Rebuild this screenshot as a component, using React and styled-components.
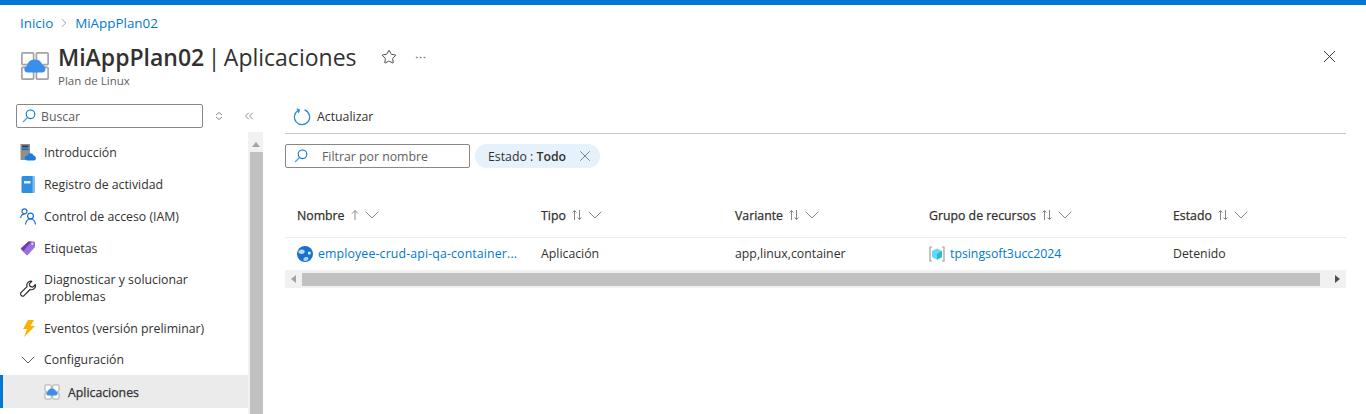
import React from 'react';
import styled, { createGlobalStyle } from 'styled-components';
import { ChevronDown, ChevronRight, ChevronsLeft, MoreHorizontal, Star, X } from 'lucide-react';

const GlobalStyle = createGlobalStyle`
  html, body {
    margin: 0;
    height: 414px;
    overflow: hidden;
    background: #fff;
  }
  body {
    font-family: "Open Sans", "Noto Sans", "Liberation Sans", sans-serif;
    font-size: 12.3px;
    color: #323130;
  }
`;

const PlanIcon = ({ size = 32 }) => (
  <svg width={size} height={size} viewBox="0 0 32 32">
    <g fill="#fff" stroke="#a3a3a3" strokeWidth="1.800">
      <rect x="2" y="2" width="12.500" height="12.500" rx="1" />
      <rect x="17.500" y="2" width="12.500" height="12.500" rx="1" />
      <rect x="2" y="17.500" width="12.500" height="12.500" rx="1" />
      <rect x="17.500" y="17.500" width="12.500" height="12.500" rx="1" />
    </g>
    <path d="M8 23a3.600 3.600 0 0 1-.6-7.100a8.600 8.600 0 0 1 16.500-1a4.200 4.200 0 0 1 .3 8.100z" fill="#3b8eea" />
  </svg>
);

const SearchIcon = () => (
  <svg width="14" height="14" viewBox="0 0 14 14" fill="none" stroke="#0078d4" strokeWidth="1.100">
    <circle cx="8.500" cy="5.300" r="4.300" />
    <path d="M5.500 8.500 1 13" stroke="#5a9fdc" strokeWidth="1.300" />
  </svg>
);

const RefreshIcon = () => (
  <svg width="18" height="18" viewBox="0 0 18 18" fill="none">
    <path d="M6 2.100a7.600 7.600 0 1 0 5.500-.200" stroke="#2a8bdc" strokeWidth="1.300" />
    <path d="M3.800 .8 6.400 2 5.300 4.800" stroke="#2a8bdc" strokeWidth="1.300" />
  </svg>
);

const SortIcon = () => (
  <svg width="12" height="12" viewBox="0 0 12 12" fill="none" stroke="#8a8886" strokeWidth="1">
    <path d="M3.500 11V1.500M1.500 3.500l2-2 2 2M8.500 1v9.500M6.500 8.500l2 2 2-2" />
  </svg>
);

const UpArrow = () => (
  <svg width="10" height="12" viewBox="0 0 10 12" fill="none" stroke="#8a8886" strokeWidth="1">
    <path d="M5 11V1.500M2 4.500l3-3 3 3" />
  </svg>
);

const IntroIcon = () => (
  <svg width="16" height="17" viewBox="0 0 16 17">
    <rect x="0.500" y="0" width="9.500" height="16" fill="#8f8f8f" />
    <rect x="2" y="1.500" width="6.500" height="1.800" fill="#1d3c5c" />
    <rect x="2" y="4.300" width="6.500" height="1.800" fill="#2a6fa8" />
    <path d="M6.800 16.500a2.600 2.600 0 0 1 .3-5.100a3.700 3.700 0 0 1 6.800.4a2.400 2.400 0 0 1 .2 4.700z" fill="#1c7cd6" />
  </svg>
);

const LogIcon = () => (
  <svg width="14" height="17" viewBox="0 0 14 17">
    <rect x="0.500" y="0" width="13" height="17" rx="1.500" fill="#2f8fe0" />
    <rect x="11.500" y="0" width="2" height="17" fill="#7dbdf0" />
    <rect x="3" y="5" width="6.500" height="2.500" fill="#e7f3fc" />
  </svg>
);

const UsersIcon = () => (
  <svg width="17" height="17" viewBox="0 0 17 17" fill="none" stroke="#1a6fd0" strokeWidth="1.200">
    <circle cx="4.500" cy="3.300" r="2.500" />
    <path d="M.6 10c.5-2.500 2-3.800 3.900-3.800" />
    <circle cx="10.500" cy="8" r="2.900" />
    <path d="M5.500 16.500c.4-3.300 2.300-5.500 5-5.500s4.600 2.200 5 5.500" />
  </svg>
);

const TagIcon = () => (
  <svg width="16" height="16" viewBox="0 0 16 16">
    <path d="M8.500 1.500h5.500a1 1 0 0 1 1 1v4.500L7.800 15a1 1 0 0 1-1.400 0L1 9.500a1 1 0 0 1 0-1.400z" fill="#9a70dc" />
    <path d="M1 8.500 8.500 1.500h3L3.500 11z" fill="#6b3fb3" />
    <circle cx="12.300" cy="3.900" r="1.100" fill="#e4d8f5" />
  </svg>
);

const WrenchIcon = () => (
  <svg width="17" height="17" viewBox="0 0 17 17" fill="none" stroke="#2b2b2b" strokeWidth="1.200" strokeLinejoin="round">
    <path d="M10.500 1.200a4 4 0 0 0-3.400 5.400L1 12.700a2 2 0 0 0 0 2.400l.6.600a2 2 0 0 0 2.400 0l6.100-6.200a4 4 0 0 0 5.200-4.800l-2.600 2.400-2.700-.7-.7-2.600 2.500-2.500a4 4 0 0 0-1.300-.1z" />
  </svg>
);

const BoltIcon = () => (
  <svg width="13" height="17" viewBox="0 0 13 17">
    <path d="M6 0h6L8.500 6H13L2 17l3-8H1z" fill="#f7b500" />
  </svg>
);

const GlobeIcon = () => (
  <svg width="16" height="16" viewBox="0 0 16 16">
    <circle cx="8" cy="8" r="8" fill="#1a72cc" />
    <path d="M1.500 5c2-2 4-2 5.500-.8s.3 3.500-1.800 3.800S1 7 1.500 5z" fill="#b5dcf8" />
    <circle cx="12.300" cy="7" r="1.500" fill="#e7f3fc" />
    <path d="M6.500 13c.5-2 3-2.500 4.500-1.500s-.5 3.500-2.500 3.500-2.300-1-2-2z" fill="#a9d4f5" />
  </svg>
);

const GroupIcon = () => (
  <svg width="16" height="16" viewBox="0 0 16 16" fill="none">
    <path d="M3 1H1v14h2M13 1h2v14h-2" stroke="#a0a0a0" strokeWidth="1.200" />
    <path d="M8 2.500 13 5v6l-5 2.800L3 11V5z" fill="#5fdcf5" />
    <path d="M8 8 13 5v6l-5 2.800z" fill="#2fb6e0" />
  </svg>
);

const Page = styled.div`
  height: 414px;
  overflow: hidden;
`;
const TopBar = styled.div`
  height: 5px;
  background: #0078d4;
`;
const Crumbs = styled.nav`
  display: flex;
  align-items: center;
  gap: 4px;
  height: 36px;
  padding-left: 20px;
  font-size: 13.400px;
  color: #0078d4;
  svg {
    color: #605e5c;
  }
`;
const Header = styled.header`
  display: flex;
  align-items: flex-start;
  height: 59px;
  padding: 0 20px 0 20px;
`;
const HeaderIcon = styled.div`
  width: 30px;
  margin: 10px 8px 0 0;
`;
const TitleBlock = styled.div`
  display: flex;
  flex-direction: column;
`;
const Title = styled.h1`
  margin: 0;
  font-size: 23px;
  line-height: 32px;
  font-weight: 400;
  word-spacing: -2.500px;
  b {
    font-weight: 600;
  }
`;
const Subtitle = styled.div`
  margin-top: 1px;
  font-size: 11.500px;
  line-height: 14px;
  color: #605e5c;
`;
const HeaderActions = styled.div`
  display: flex;
  align-items: center;
  gap: 17px;
  height: 32px;
  margin-left: 24px;
  color: #323130;
`;
const CloseButton = styled.div`
  margin: 5px 6px 0 auto;
`;
const Body = styled.div`
  display: flex;
`;
const Side = styled.aside`
  width: 265px;
  flex: none;
`;
const SideTools = styled.div`
  display: flex;
  align-items: center;
  height: 32px;
  padding-left: 16px;
  color: #8a8886;
`;
const SideSearch = styled.div`
  display: flex;
  flex: none;
  align-items: center;
  gap: 5px;
  box-sizing: border-box;
  width: 187px;
  height: 24px;
  padding-left: 5px;
  border: 1px solid #8a8886;
  border-radius: 2px;
  color: #605e5c;
`;
const SortToggle = styled.div`
  display: flex;
  margin-left: 12px;
`;
const Collapse = styled.div`
  display: flex;
  margin-left: 19px;
  color: #605e5c;
`;
const SideColumns = styled.div`
  display: flex;
`;
const Menu = styled.ul`
  width: 248px;
  margin: 0;
  padding: 4px 0 0;
  list-style: none;
`;
const Item = styled.li`
  display: flex;
  align-items: center;
  height: ${(p) => p.$h || 32}px;
  box-sizing: border-box;
  padding-left: ${(p) => (p.$sub ? 44 : 20)}px;
  background: ${(p) => (p.$active ? '#ebebeb' : 'transparent')};
  border-left: ${(p) => (p.$active ? '3px solid #0078d4' : 'none')};
  line-height: 17px;
  ${(p) => p.$active && 'padding-left: 41px; padding-top: 1px;'}
`;
const ItemIcon = styled.span`
  display: flex;
  justify-content: center;
  width: 16px;
  margin-right: 8px;
  flex: none;
  svg {
    flex: none;
  }
`;
const ItemLabel = styled.span`
  max-width: 172px;
  ${(p) => p.$active && '-webkit-text-stroke: 0.25px #323130;'}
`;
const Scroll = styled.div`
  width: 15px;
  height: 282px;
  background: #f1f1f1;
`;
const ScrollUp = styled.div`
  height: 20px;
  display: flex;
  align-items: center;
  justify-content: center;
  padding-top: 4px;
  box-sizing: border-box;
  &::before {
    content: '';
    border: 4px solid transparent;
    border-top: 0;
    border-bottom: 5px solid #a3a3a3;
  }
`;
const ScrollThumb = styled.div`
  height: 262px;
  margin-left: 2px;
  background: #c1c1c1;
`;
const Main = styled.main`
  flex: 1;
  margin: 0 20px;
  min-width: 0;
`;
const Toolbar = styled.div`
  display: flex;
  align-items: center;
  gap: 6px;
  height: 33px;
  padding-left: 8px;
  border-bottom: 1px solid #c8c6c4;
`;
const Filters = styled.div`
  display: flex;
  gap: 5px;
  margin-top: 10px;
`;
const FilterBox = styled.div`
  display: flex;
  align-items: center;
  gap: 14px;
  box-sizing: border-box;
  width: 185px;
  height: 24px;
  padding-left: 8px;
  border: 1px solid #8a8886;
  border-radius: 2px;
  color: #605e5c;
`;
const Pill = styled.div`
  display: flex;
  align-items: center;
  gap: 10px;
  box-sizing: border-box;
  width: 125px;
  height: 24px;
  padding-left: 13px;
  border-radius: 12px;
  background: #e5f1fb;
  b {
    font-weight: 600;
  }
  svg {
    color: #605e5c;
  }
`;
const Grid = styled.div`
  display: grid;
  box-sizing: border-box;
  grid-template-columns: 244px 194px 194px 244px 1fr;
  padding-left: 12px;
  align-items: center;
`;
const HeadRow = styled(Grid)`
  height: 41px;
  margin-top: 29px;
  padding-bottom: 4px;
  border-bottom: 1px solid #edebe9;
  -webkit-text-stroke: 0.25px #323130;
`;
const HeadCell = styled.div`
  display: flex;
  align-items: center;
  gap: 5px;
  svg:last-child {
    margin-left: -5px;
    color: #8a8886;
  }
`;
const DataRow = styled(Grid)`
  height: 32px;
  padding-bottom: 1px;
`;
const NameCell = styled.div`
  display: flex;
  align-items: center;
  gap: 5px;
  color: #0078d4;
  white-space: nowrap;
`;
const AppName = styled(NameCell)`
  letter-spacing: 0.15px;
`;
const HScroll = styled.div`
  display: flex;
  align-items: center;
  height: 18px;
  background: #f1f1f1;
`;
const HArrow = styled.div`
  width: 17px;
  display: flex;
  justify-content: center;
  &::before {
    content: '';
    border: 4px solid transparent;
    ${(p) => (p.$right ? 'border-right: 0; border-left: 5px solid #505050;' : 'border-left: 0; border-right: 5px solid #a3a3a3;')}
  }
`;
const HThumb = styled.div`
  flex: 1;
  height: 13px;
  background: #c1c1c1;
  margin-right: 9px;
`;

const items = [
  { label: 'Introducción', icon: <IntroIcon /> },
  { label: 'Registro de actividad', icon: <LogIcon /> },
  { label: 'Control de acceso (IAM)', icon: <UsersIcon /> },
  { label: 'Etiquetas', icon: <TagIcon /> },
  { label: 'Diagnosticar y solucionar problemas', icon: <WrenchIcon />, h: 48 },
  { label: 'Eventos (versión preliminar)', icon: <BoltIcon /> },
  { label: 'Configuración', icon: <ChevronDown size={24} strokeWidth={1} color="#605e5c" />, h: 31 },
];

const columns = ['Tipo', 'Variante', 'Grupo de recursos', 'Estado'];

const App = () => {
  return (
    <Page>
      <GlobalStyle />
      <TopBar />
      <Crumbs>
        Inicio <ChevronRight size={14} strokeWidth={1} /> MiAppPlan02
      </Crumbs>
      <Header>
        <HeaderIcon>
          <PlanIcon size={30} />
        </HeaderIcon>
        <TitleBlock>
          <Title>
            <b>MiAppPlan02</b> | Aplicaciones
          </Title>
          <Subtitle>Plan de Linux</Subtitle>
        </TitleBlock>
        <HeaderActions>
          <Star size={16} strokeWidth={1.3} />
          <MoreHorizontal size={13} strokeWidth={1} color="#605e5c" />
        </HeaderActions>
        <CloseButton>
          <X size={21} strokeWidth={1.1} />
        </CloseButton>
      </Header>
      <Body>
        <Side>
          <SideTools>
            <SideSearch>
              <SearchIcon />
              Buscar
            </SideSearch>
            <SortToggle>
              <svg width="8" height="10" viewBox="0 0 8 10" fill="none" stroke="#8a8886">
                <path d="M1 4 4 1.500 7 4M1 6l3 2.500L7 6" />
              </svg>
            </SortToggle>
            <Collapse>
              <ChevronsLeft size={14} strokeWidth={1.2} />
            </Collapse>
          </SideTools>
          <SideColumns>
            <Menu>
              {items.map((item) => (
                <Item key={item.label} $h={item.h}>
                  <ItemIcon>{item.icon}</ItemIcon>
                  <ItemLabel>{item.label}</ItemLabel>
                </Item>
              ))}
              <Item $sub $active $h={33}>
                <ItemIcon>
                  <PlanIcon size={16} />
                </ItemIcon>
                <ItemLabel $active>Aplicaciones</ItemLabel>
              </Item>
            </Menu>
            <Scroll>
              <ScrollUp />
              <ScrollThumb />
            </Scroll>
          </SideColumns>
        </Side>
        <Main>
          <Toolbar>
            <RefreshIcon />
            Actualizar
          </Toolbar>
          <Filters>
            <FilterBox>
              <SearchIcon />
              Filtrar por nombre
            </FilterBox>
            <Pill>
              <span>
                Estado : <b>Todo</b>
              </span>
              <X size={18} strokeWidth={1} />
            </Pill>
          </Filters>
          <HeadRow>
            <HeadCell>
              Nombre <UpArrow /> <ChevronDown size={24} strokeWidth={1} />
            </HeadCell>
            {columns.map((col) => (
              <HeadCell key={col}>
                {col} <SortIcon /> <ChevronDown size={24} strokeWidth={1} />
              </HeadCell>
            ))}
          </HeadRow>
          <DataRow>
            <AppName>
              <GlobeIcon />
              employee-crud-api-qa-container...
            </AppName>
            <div>Aplicación</div>
            <div>app,linux,container</div>
            <NameCell>
              <GroupIcon />
              tpsingsoft3ucc2024
            </NameCell>
            <div>Detenido</div>
          </DataRow>
          <HScroll>
            <HArrow />
            <HThumb />
            <HArrow $right />
          </HScroll>
        </Main>
      </Body>
    </Page>
  );
};

export default App;
